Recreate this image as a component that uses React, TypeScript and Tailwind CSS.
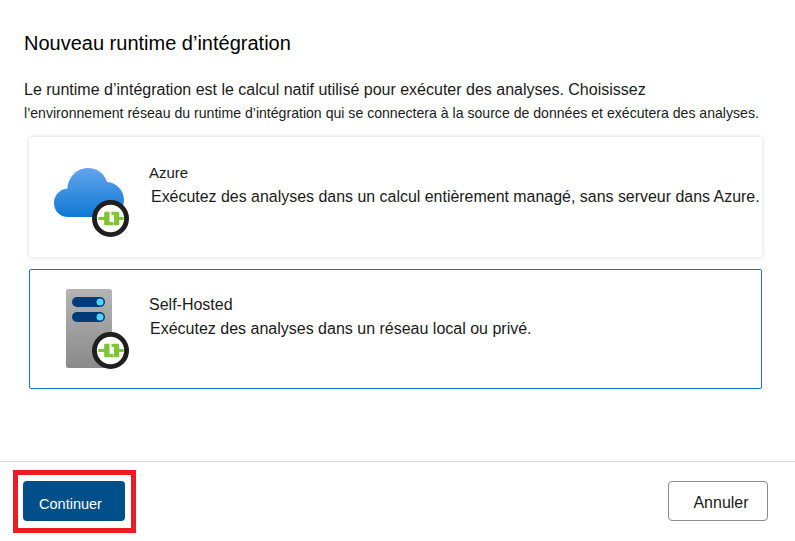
import React from 'react';

const font = { fontFamily: '"Liberation Sans", Arial, sans-serif' };

const Badge = () => (
  <svg width="37" height="37" viewBox="0 0 38 38" className="absolute right-0 bottom-0">
    <circle cx="19" cy="19" r="16.5" fill="#fff" stroke="#1f1f1f" strokeWidth="5" />
    {/* left piece: stub + L */}
    <path d="M6.500 17.500h6V13c0-.6.4-1 1-1h4.500v10.500h4V26h-8.500c-.6 0-1-.4-1-1v-4.500h-6z" fill="#7fc433" />
    {/* right piece: 7 + stub */}
    <path d="M32.500 20.500h-4.500V25c0 .6-.4 1-1 1h-4.500V15.500H20V12h7c.6 0 1 .4 1 1v4.500h4.500z" fill="#7fc433" />
  </svg>
);

const CloudIcon = () => (
  <div className="relative w-[75px] h-[69px]">
    <svg width="70" height="49" viewBox="0 0 70 49" className="absolute left-0 top-0">
      <defs>
        <linearGradient id="cloud" x1="0" y1="0" x2="0" y2="1">
          <stop offset="0" stopColor="#64a5ee" />
          <stop offset="1" stopColor="#0f78d4" />
        </linearGradient>
      </defs>
      <path
        d="M14 49C6 49 0 43 0 35 0 27 6 21 13.500 20.500 14 9 23 0 34 0 43 0 50 5 53 14 62 14.500 70 22 70 32 70 42 62 49 53 49z"
        fill="url(#cloud)"
      />
    </svg>
    <Badge />
  </div>
);

const ServerIcon = () => (
  <div className="relative w-[63px] h-[80px]">
    <svg width="46" height="79" viewBox="0 0 46 79" className="absolute left-0 top-0">
      <defs>
        <linearGradient id="tower" x1="0" y1="0" x2="0" y2="1">
          <stop offset="0" stopColor="#b4b4b4" />
          <stop offset="1" stopColor="#8a8a8a" />
        </linearGradient>
      </defs>
      <rect x="0" y="0" width="46" height="79" rx="2.5" fill="url(#tower)" />
      <rect x="6" y="8" width="33" height="10" rx="5" fill="#003a78" />
      <circle cx="34" cy="13" r="3.500" fill="#50d4fb" />
      <rect x="6" y="23" width="33" height="10" rx="5" fill="#003a78" />
      <circle cx="34" cy="28" r="3.500" fill="#50d4fb" />
    </svg>
    <Badge />
  </div>
);

export default function App() {
  return (
    <div className="w-[795px] h-[541px] bg-white flex flex-col overflow-hidden text-[#1a1a1a]" style={font}>
      <div className="flex-1 pl-6 pt-[31px]">
        <h1 className="text-[20px] leading-[24px] font-normal text-black">Nouveau runtime d’intégration</h1>
        <p className="mt-[25px] text-[16px] leading-[20px] whitespace-nowrap">
          Le runtime d’intégration est le calcul natif utilisé pour exécuter des analyses. Choisissez
        </p>
        <p className="mt-[5px] text-[14.1px] leading-[16px] whitespace-nowrap">
          l’environnement réseau du runtime d’intégration qui se connectera à la source de données et exécutera des analyses.
        </p>
        <div className="mt-[16px] ml-[5px] w-[733px] flex flex-col gap-[12px]">
          <div className="h-[120px] flex rounded-[2px] bg-white shadow-[0_0_5px_rgba(0,0,0,0.16)]">
            <div className="w-[120px] shrink-0 pl-[25px] pt-[31px]">
              <CloudIcon />
            </div>
            <div className="pt-[27px] whitespace-nowrap">
              <div className="text-[15px] leading-[18px]">Azure</div>
              <div className="mt-[5px] ml-[2px] text-[15.95px] leading-[20px]">
                Exécutez des analyses dans un calcul entièrement managé, sans serveur dans Azure.
              </div>
            </div>
          </div>
          <div className="h-[120px] flex rounded-[2px] border border-[#0f78d4] bg-white">
            <div className="w-[119px] shrink-0 pl-[36px] pt-[19px]">
              <ServerIcon />
            </div>
            <div className="pt-[26px] whitespace-nowrap">
              <div className="text-[16px] leading-[18px]">Self-Hosted</div>
              <div className="mt-[5px] ml-[1px] text-[16px] leading-[20px]">
                Exécutez des analyses dans un réseau local ou privé.
              </div>
            </div>
          </div>
        </div>
      </div>
      <div className="h-[80px] shrink-0 border-t border-[#d9d9d9] flex items-start justify-between pl-[13px] pr-[27px] pt-[8px]">
        <div className="border-[5px] border-[#ed1c24] pl-[5px] pr-[6px] pt-[6px] pb-[7px]">
          <button className="block w-[102px] h-[40px] rounded-[4px] bg-[#004f8b] text-white text-[14.5px] pt-[7px] pr-[7px]">
            Continuer
          </button>
        </div>
        <button className="mt-[11px] w-[100px] h-[40px] rounded-[4px] border border-[#8a8a8a] bg-white text-[16px] pt-[3px] pl-[6px] text-[#1a1a1a]">
          Annuler
        </button>
      </div>
    </div>
  );
}
